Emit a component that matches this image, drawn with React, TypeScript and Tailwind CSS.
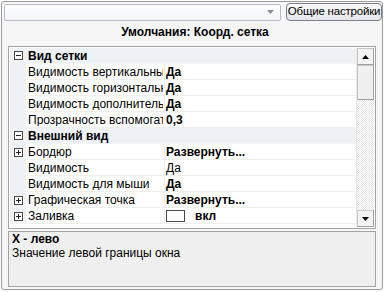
import React from 'react';

type Row =
  | { kind: 'cat'; label: string }
  | { kind: 'prop'; label: string; value: string; bold?: boolean; expander?: boolean; swatch?: boolean };

const rows: Row[] = [
  { kind: 'cat', label: 'Вид сетки' },
  { kind: 'prop', label: 'Видимость вертикальных линий', value: 'Да', bold: true },
  { kind: 'prop', label: 'Видимость горизонтальных линий', value: 'Да', bold: true },
  { kind: 'prop', label: 'Видимость дополнительных линий', value: 'Да', bold: true },
  { kind: 'prop', label: 'Прозрачность вспомогательных', value: '0,3', bold: true },
  { kind: 'cat', label: 'Внешний вид' },
  { kind: 'prop', label: 'Бордюр', value: 'Развернуть...', bold: true, expander: true },
  { kind: 'prop', label: 'Видимость', value: 'Да' },
  { kind: 'prop', label: 'Видимость для мыши', value: 'Да', bold: true },
  { kind: 'prop', label: 'Графическая точка', value: 'Развернуть...', bold: true, expander: true },
  { kind: 'prop', label: 'Заливка', value: 'вкл', bold: true, expander: true, swatch: true },
];

function Expander({ open }: { open: boolean }) {
  return (
    <div className="relative w-[9px] h-[9px] border border-[#4a4a4a] bg-white">
      <div className="absolute left-[1px] top-[3px] w-[5px] h-px bg-[#222]" />
      {!open && <div className="absolute left-[3px] top-[1px] w-px h-[5px] bg-[#222]" />}
    </div>
  );
}

function Arrow({ up }: { up?: boolean }) {
  return (
    <svg width="7" height="4" viewBox="0 0 7 4">
      {up ? <polygon points="0,4 7,4 3.5,0" fill="#000" /> : <polygon points="0,0 7,0 3.5,4" fill="#000" />}
    </svg>
  );
}

export default function App() {
  return (
    <div
      className="w-[385px] h-[292px] bg-white p-px text-[12px] text-black"
      style={{ fontFamily: '"Liberation Sans", Arial, sans-serif' }}
    >
      <div className="w-[382px] h-[289px] border border-[#9a9a9a] rounded-[3px] bg-[#f6f6f6] flex flex-col">
        <div className="flex items-center gap-[5px] pl-[2px] pt-[1px]">
          <div className="w-[277px] h-[17px] border border-[#b8bcc4] rounded-[2px] bg-gradient-to-b from-white to-[#f2f4f7] flex items-center justify-end pr-[6px]">
            <svg width="7" height="4" viewBox="0 0 7 4">
              <polygon points="0,0 7,0 3.5,4" fill="#8a8a8a" />
            </svg>
          </div>
          <div className="w-[96px] h-[18px] border border-[#7a7f8a] rounded-[4px] bg-gradient-to-b from-[#fafafa] to-[#e4e6ea] flex items-center justify-center leading-none whitespace-nowrap text-[11.5px] tracking-[-0.2px]">
            Общие настройки
          </div>
        </div>

        <div className="h-[25px] flex justify-center font-bold pl-[6px] pt-[5px] leading-none">
          Умолчания: Коорд. сетка
        </div>

        <div className="mx-[6px] h-[183px] border border-[#a4a4a4] bg-white flex p-px">
          <div className="flex-1 flex flex-col overflow-hidden">
            {rows.map((r, i) =>
              r.kind === 'cat' ? (
                <div key={i} className="h-[16px] shrink-0 bg-[#eef1f6] border-b border-[#f3f4f6] flex items-center font-bold">
                  <div className="w-[16px] flex justify-center">
                    <Expander open />
                  </div>
                  <span className="pl-[2px] leading-none">{r.label}</span>
                </div>
              ) : (
                <div key={i} className="h-[16px] shrink-0 flex items-stretch">
                  <div className="w-[16px] bg-[#eef1f6] flex items-center justify-center">
                    {r.expander && <Expander open={false} />}
                  </div>
                  <div className="w-[138px] border-b border-[#efefef] flex items-center pl-[2px] pr-px">
                    <div className="flex-1 overflow-hidden whitespace-nowrap leading-none">{r.label}</div>
                  </div>
                  <div className="flex-1 border-b border-l border-[#efefef] flex items-center pl-[1px] whitespace-nowrap leading-none">
                    {r.swatch ? (
                      <>
                        <div className="w-[19px] h-[12px] border border-[#4a4a4a] bg-white" />
                        <span className="pl-[10px] font-bold">{r.value}</span>
                      </>
                    ) : (
                      <span className={r.bold ? 'font-bold' : ''}>{r.value}</span>
                    )}
                  </div>
                </div>
              )
            )}
          </div>
          <div className="w-[18px] flex flex-col bg-[repeating-conic-gradient(#e6e6e6_0_25%,#ffffff_0_50%)] bg-[length:2px_2px] border-l border-[#e6e6e6]">
            <div className="h-[17px] bg-[#f3f3f3] border border-[#c8c8c8] border-r-[#a0a0a0] border-b-[#a0a0a0] flex items-center justify-center">
              <Arrow up />
            </div>
            <div className="h-[35px] bg-[#f0f0f0] border border-[#c8c8c8] border-r-[#a0a0a0] border-b-[#a0a0a0]" />
            <div className="flex-1" />
            <div className="h-[17px] bg-[#f3f3f3] border border-[#c8c8c8] border-r-[#a0a0a0] border-b-[#a0a0a0] flex items-center justify-center">
              <Arrow />
            </div>
          </div>
        </div>

        <div className="mx-[6px] mt-[2px] h-[56px] border border-[#a4a4a4] bg-[#efefef] px-[3px] leading-[14px]">
          <div className="font-bold">X - лево</div>
          <div>Значение левой границы окна</div>
        </div>
      </div>
    </div>
  );
}
